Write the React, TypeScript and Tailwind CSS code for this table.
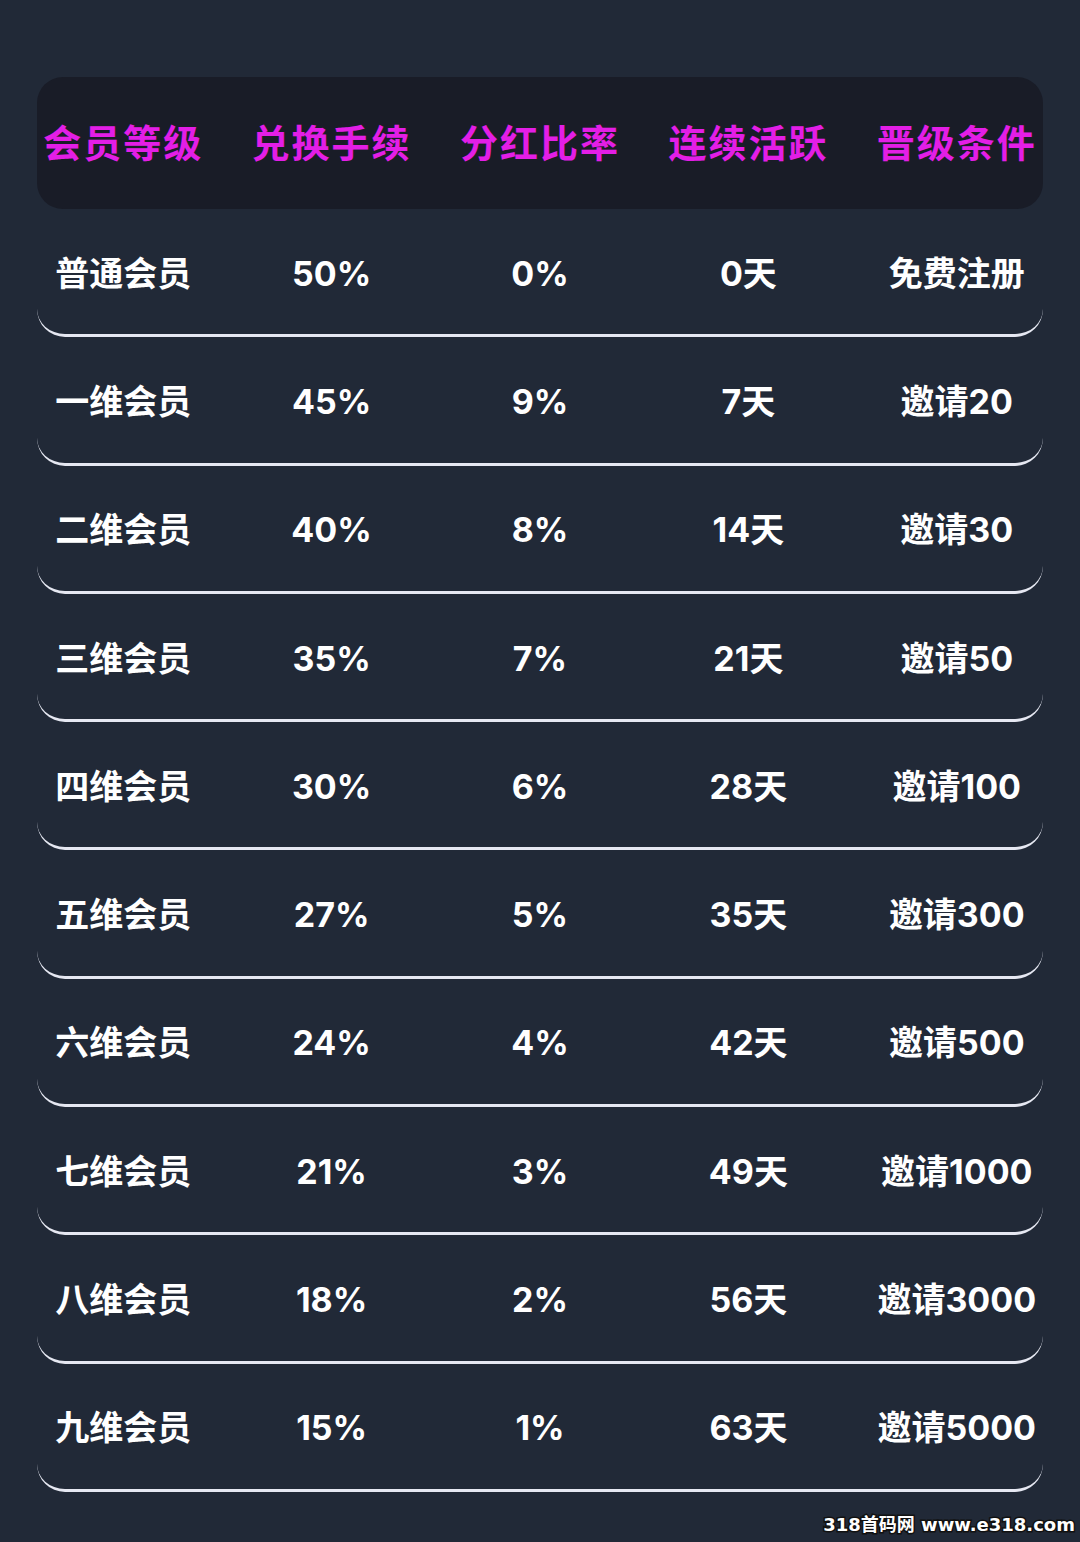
const rows = [
  ["普通会员", "50%", "0%", "0天", "免费注册"],
  ["一维会员", "45%", "9%", "7天", "邀请20"],
  ["二维会员", "40%", "8%", "14天", "邀请30"],
  ["三维会员", "35%", "7%", "21天", "邀请50"],
  ["四维会员", "30%", "6%", "28天", "邀请100"],
  ["五维会员", "27%", "5%", "35天", "邀请300"],
  ["六维会员", "24%", "4%", "42天", "邀请500"],
  ["七维会员", "21%", "3%", "49天", "邀请1000"],
  ["八维会员", "18%", "2%", "56天", "邀请3000"],
  ["九维会员", "15%", "1%", "63天", "邀请5000"],
];

const headers = ["会员等级", "兑换手续", "分红比率", "连续活跃", "晋级条件"];

export default function App() {
  return (
    <main
      className="relative min-h-[1542px] bg-[#212937] pt-[77px]"
      style={{ fontFamily: 'Inter, "Noto Sans CJK SC", sans-serif' }}
    >
      <div className="mx-[37px] flex h-[132px] items-center rounded-[26px] bg-[#191c27]">
        <div className="-mx-[18px] grid flex-1 grid-cols-5 pb-[1px]">
          {headers.map((h) => (
            <div
              key={h}
              className="text-center text-[38px] font-bold leading-none tracking-[2px] text-[#e31ee6]"
            >
              {h}
            </div>
          ))}
        </div>
      </div>

      {rows.map((row) => (
        <div
          key={row[0]}
          className="mx-[37px] flex h-[128.3px] items-center rounded-b-[28px] border-b-[3px] border-[#e6e8f2]"
        >
          <div className="-mx-[18px] grid flex-1 grid-cols-5 pt-[4px]">
            {row.map((cell, i) => (
              <div
                key={i}
                className="text-center text-[34px] font-bold leading-none text-white"
              >
                {cell}
              </div>
            ))}
          </div>
        </div>
      ))}

      <div
        className="absolute bottom-[8px] right-[5px] text-[18px] font-bold leading-none text-white [-webkit-text-stroke:3px_#111] [paint-order:stroke_fill]"
        style={{ fontFamily: '"DejaVu Sans", "Noto Sans CJK SC", sans-serif' }}
      >
        318首码网 www.e318.com
      </div>
    </main>
  );
}
